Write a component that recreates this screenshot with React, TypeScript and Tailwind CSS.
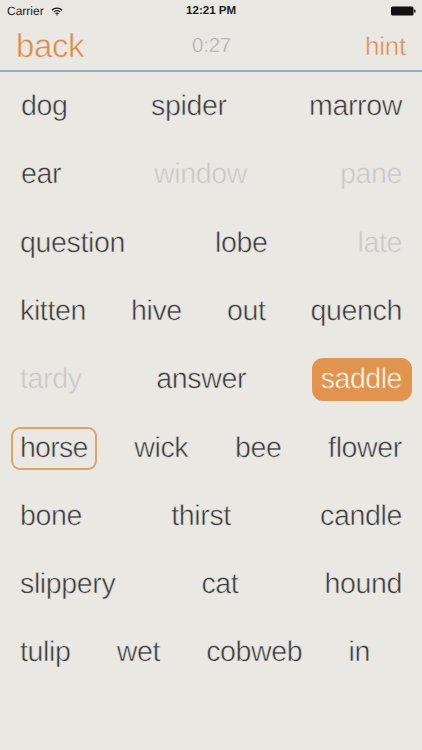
const rows: [string, string?][][] = [
  [["dog", "in2"], ["spider", "sh"], ["marrow"]],
  [["ear", "in2"], ["window", "off"], ["pane", "off"]],
  [["question"], ["lobe"], ["late", "off"]],
  [["kitten"], ["hive"], ["out"], ["quench"]],
  [["tardy", "off"], ["answer"], ["saddle", "on"]],
  [["horse", "ring"], ["wick"], ["bee"], ["flower"]],
  [["bone"], ["thirst"], ["candle"]],
  [["slippery"], ["cat"], ["hound"]],
  [["tulip"], ["wet"], ["cobweb"], ["in", "last"]],
];

function Word({ text, kind }: { text: string; kind?: string }) {
  if (kind === "on")
    return <span className="-ml-[9px] -mr-[10px] rounded-[11px] bg-[#e2934d] pl-[9px] pr-[10px] py-[6px] leading-[31px] tracking-[-0.5px] text-[#fff9f0] [-webkit-text-stroke:0.5px_#e2934d]">{text}</span>;
  if (kind === "ring")
    return <span className="-mx-[9px] rounded-[9px] border-2 border-[#e0a26b] px-[7px] py-[4px] leading-[31px] tracking-[-0.8px]">{text}</span>;
  if (kind === "off") return <span className="text-[#c8c8c5]">{text}</span>;
  if (kind === "last") return <span className="mr-[32px]">{text}</span>;
  if (kind === "in2") return <span className="ml-[1px]">{text}</span>;
  if (kind === "sh") return <span className="ml-[1px]">{text}</span>;
  return <span>{text}</span>;
}

export default function App() {
  return (
    <div className="h-[750px] w-[422px] overflow-hidden bg-[#e9e8e3] font-['Liberation_Sans',sans-serif] [text-rendering:geometricPrecision]">
      <div className="relative flex h-[22px] items-center justify-between px-[7px] text-[12px] font-normal text-[#1c1c1c]">
        <div className="flex items-center gap-[7px]">
          <span>Carrier</span>
          <svg width="12" height="9" viewBox="0 0 14 10" fill="none" stroke="#1c1c1c" strokeWidth="1.5">
            <path d="M1 3.6a8.5 8.5 0 0 1 12 0" />
            <path d="M3.2 5.7a5.4 5.4 0 0 1 7.6 0" />
            <path d="M5.3 7.6a2.4 2.4 0 0 1 3.4 0" />
            <circle cx="7" cy="9" r="0.8" fill="#1c1c1c" stroke="none" />
          </svg>
        </div>
        <span className="absolute left-[186px] text-[11.6px] font-bold">12:21 PM</span>
        <svg width="25" height="10" viewBox="0 0 25 10" className="mr-[-1px]">
          <rect x="0" y="0.5" width="22.5" height="9" rx="1.5" fill="#111" />
          <rect x="23" y="3.5" width="1.5" height="3" rx="0.6" fill="#111" />
        </svg>
      </div>
      <div className="flex h-[50px] items-center justify-between border-b-2 border-[#8fb0ba] pl-[16px] pr-[16px] [-webkit-text-stroke:0.5px_#e9e8e3]">
        <span className="text-[33px] tracking-[-0.4px] text-[#e08c48]">back</span>
        <span className="mr-[26px] text-[20.5px] tracking-[-0.2px] text-[#a6a6a3]">0:27</span>
        <span className="text-[26px] tracking-[-0.2px] text-[#e08c48]">hint</span>
      </div>
      <div className="flex flex-col pt-[0.4px] text-[28.6px] tracking-[-0.4px] text-[#3c3c3c] [-webkit-text-stroke:0.5px_#e9e8e3]">
        {rows.map((r, i) => (
          <div key={i} className="flex h-[68.3px] items-center justify-between pl-[20px] pr-[20px]">
            {r.map(([t, k]) => (
              <Word key={t} text={t} kind={k} />
            ))}
          </div>
        ))}
      </div>
    </div>
  );
}
